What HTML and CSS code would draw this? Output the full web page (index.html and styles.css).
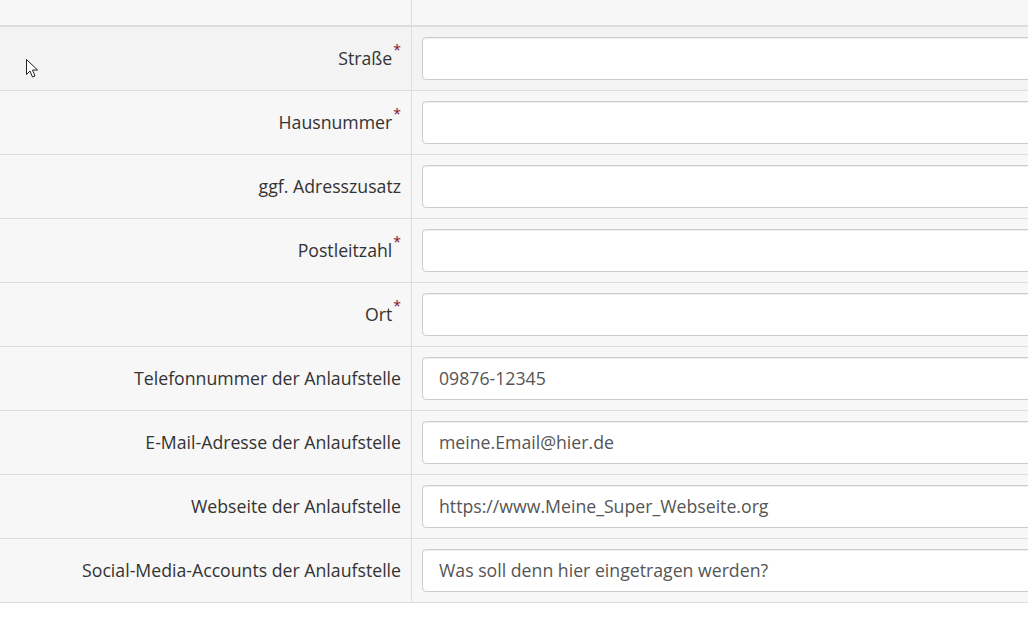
FILE: index.html
```
<!doctype html>
<html lang="de">

<head>
    <meta charset="utf-8">
    <title>Anlaufstelle</title>
    <link rel="stylesheet" href="styles.css">
</head>

<body>
    <div id="form-table">
        <div class="row head">
            <div class="label"></div>
            <div class="field"></div>
        </div>

        <div class="row hover">
            <div class="label">Straße<sup class="req">*</sup></div>
            <div class="field"><input type="text" class="inp" value=""></div>
        </div>
        <div class="row">
            <div class="label">Hausnummer<sup class="req">*</sup></div>
            <div class="field"><input type="text" class="inp" value=""></div>
        </div>
        <div class="row">
            <div class="label">ggf. Adresszusatz</div>
            <div class="field"><input type="text" class="inp" value=""></div>
        </div>
        <div class="row">
            <div class="label">Postleitzahl<sup class="req">*</sup></div>
            <div class="field"><input type="text" class="inp" value=""></div>
        </div>
        <div class="row">
            <div class="label">Ort<sup class="req">*</sup></div>
            <div class="field"><input type="text" class="inp" value=""></div>
        </div>
        <div class="row">
            <div class="label">Telefonnummer der Anlaufstelle</div>
            <div class="field"><input type="text" class="inp" value="09876-12345"></div>
        </div>
        <div class="row">
            <div class="label">E-Mail-Adresse der Anlaufstelle</div>
            <div class="field"><input type="text" class="inp" value="meine.Email@hier.de"></div>
        </div>
        <div class="row">
            <div class="label">Webseite der Anlaufstelle</div>
            <div class="field"><input type="text" class="inp" value="https://www.Meine_Super_Webseite.org"></div>
        </div>
        <div class="row last">
            <div class="label">Social-Media-Accounts der Anlaufstelle</div>
            <div class="field"><input type="text" class="inp" value="Was soll denn hier eingetragen werden?"></div>
        </div>
    </div>

    <!-- mouse pointer -->
    <svg class="pointer" width="14" height="22" viewBox="0 0 14 22">
        <path d="M1.5 1.5 L1.5 16.5 L5 13 L7.5 19 L10 18 L7.5 12 L12.5 12 Z" fill="#fff" stroke="#222" stroke-width="1" stroke-linejoin="miter"/>
    </svg>
</body>

</html>
```

FILE: styles.css
```
html, body {
    margin: 0;
    padding: 0;
    background: #fff;
    overflow: hidden;
}

body {
    font-family: 'Open Sans', sans-serif;
    font-size: 17.7px;
    color: #333;
}

#form-table {
    width: 1028px;
    overflow: hidden;
}

.row {
    display: grid;
    grid-template-columns: 412px 1fr;
    height: 64px;
    border-bottom: 1px solid #ddd;
    box-sizing: border-box;
    background-color: #f7f7f7;
}

.row.head {
    height: 27px;
    border-bottom: 2px solid #ddd;
}

.row.hover {
    background-color: #f3f3f3;
}

.label {
    display: flex;
    align-items: center;
    justify-content: flex-end;
    padding-right: 10px;
    padding-bottom: 2px;
    border-right: 1px solid #ddd;
}

.field {
    display: flex;
    align-items: center;
    padding-left: 10px;
    overflow: hidden;
}

.req {
    color: #7d1128;
    font-size: 14px;
    align-self: flex-start;
    margin-top: 13px;
    margin-left: 1px;
}

.inp {
    flex: none;
    width: 700px;
    height: 43px;
    box-sizing: border-box;
    border: 1px solid #ccc;
    border-radius: 4px;
    padding: 0 16px 1px;
    background: #fff;
    font-family: 'Open Sans', sans-serif;
    font-size: 17.7px;
    color: #555;
    box-shadow: inset 0 1px 1px rgba(0, 0, 0, .075);
    outline: none;
}

.pointer {
    position: absolute;
    left: 25px;
    top: 58px;
}
```
